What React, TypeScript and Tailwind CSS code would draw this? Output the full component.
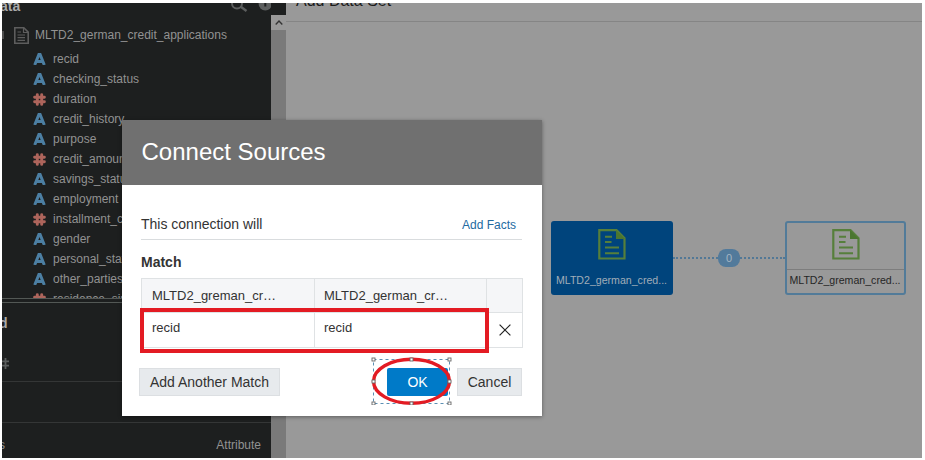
import React from "react";

type Kind = "text" | "number";

const columns: { name: string; kind: Kind }[] = [
  { name: "recid", kind: "text" },
  { name: "checking_status", kind: "text" },
  { name: "duration", kind: "number" },
  { name: "credit_history", kind: "text" },
  { name: "purpose", kind: "text" },
  { name: "credit_amount", kind: "number" },
  { name: "savings_status", kind: "text" },
  { name: "employment", kind: "text" },
  { name: "installment_commitment", kind: "number" },
  { name: "gender", kind: "text" },
  { name: "personal_status", kind: "text" },
  { name: "other_parties", kind: "text" },
  { name: "residence_since", kind: "number" },
];

function KindIcon({ kind }: { kind: Kind }) {
  return kind === "text" ? (
    <svg className="h-3 w-[13px] shrink-0" viewBox="0 0 13 12" fill="none" stroke="#4c7fa3" strokeWidth="3">
      <path d="M1.7 12 5.9 1.5h1.2L11.3 12M3.4 8.6h6.2" />
    </svg>
  ) : (
    <HashIcon color="#ae655c" />
  );
}

function HashIcon({ color }: { color: string }) {
  return (
    <svg className="h-[13px] w-[13px] shrink-0" viewBox="0 0 13 13" fill="none" stroke={color} strokeWidth="2.9" strokeLinecap="round">
      <path d="M4.3 1.6v9.8M8.7 1.6v9.8M1.6 4.3h9.8M1.6 8.7h9.8" />
    </svg>
  );
}

function SheetIcon() {
  return (
    <svg className="h-[31px] w-7" viewBox="0 0 28 31" fill="none">
      <path d="M1.3 1.2h17.2l8 8v20.3H1.3z" stroke="#567f3b" strokeWidth="2.2" />
      <path d="M18 1v9h9z" fill="#4b7630" />
      <path d="M7 7.7h7M7 13h6.5M7 18.5h14M7 24.2h14" stroke="#567f3b" strokeWidth="2" />
    </svg>
  );
}

function Sidebar() {
  return (
    <aside className="flex w-[269px] shrink-0 flex-col overflow-hidden bg-[#1d1f1f] text-xs text-[#929292]">
      <div className="flex h-3 shrink-0 items-end justify-between overflow-hidden">
        <span className="-ml-0.5 mb-px text-sm leading-4 font-bold text-[#aaaaaa]">ata</span>
        <svg className="h-4 w-10 shrink-0" viewBox="0 0 40 16" fill="none">
          <circle cx="6" cy="4.5" r="5" stroke="#5c5e5e" strokeWidth="2" />
          <path d="m9.5 7.5 6 4.5" stroke="#5c5e5e" strokeWidth="2.4" />
          <circle cx="34.3" cy="4.7" r="6.7" fill="#5c5e5e" />
          <path d="M34.3 2v5.5" stroke="#1d1f1f" strokeWidth="2" />
        </svg>
      </div>
      <div className="flex h-[283px] shrink-0 flex-col overflow-hidden pt-[10px]">
        <div className="flex h-5 shrink-0 items-center">
          <span className="h-2 w-[2px] bg-[#4d4d4d]" />
          <svg className="ml-[10px] h-[17px] w-[15px]" viewBox="0 0 15 17" fill="none" stroke="#5d5d5d">
            <path d="M.8.8h9l4.4 4.4v11H.8z" strokeWidth="1.6" />
            <path d="M9.5 1v4.5H14M3.5 5h3.5M3.5 8h7.5M3.5 10.7h7.5M3.5 13.3h7.5" strokeWidth="1.2" />
          </svg>
          <span className="ml-[6px] leading-5">MLTD2_german_credit_applications</span>
        </div>
        <div className="mt-1 flex flex-col">
          {columns.map((c) => (
            <div key={c.name} className="flex h-5 shrink-0 items-center gap-[7px] pl-[31px] whitespace-nowrap">
              <KindIcon kind={c.kind} />
              <span className="leading-5">{c.name}</span>
            </div>
          ))}
        </div>
      </div>
      <div className="h-[5px] shrink-0 border-y border-[#535855]" />
      <div className="flex h-[79px] shrink-0 flex-col border-b border-[#343636]">
        <span className="mt-[10px] -ml-[3px] text-sm leading-5 font-bold text-[#aaaaaa]">d</span>
        <svg className="mt-[24px] h-[13px] w-2" viewBox="0 0 8 13" fill="none" stroke="#5b5e5e" strokeWidth="1.8">
          <path d="M3.5 1v11M0 4.3h7M0 8.7h7" />
        </svg>
      </div>
      <div className="h-[41px] shrink-0 border-b border-[#343636]" />
      <div className="flex flex-1 items-center justify-between pt-[9px] pr-[10px]">
        <span className="-ml-[3px]">s</span>
        <span>Attribute</span>
      </div>
    </aside>
  );
}

function Scrollbar() {
  return (
    <div className="flex w-[15px] shrink-0 flex-col bg-[#7a7a7a]">
      <div className="h-3 bg-[#1d1f1f]" />
      <div className="flex h-[15px] items-center justify-center bg-[#999]">
        <svg className="h-[5px] w-2" viewBox="0 0 8 5" fill="none" stroke="#343434" strokeWidth="1.4">
          <path d="m.7 4.4 3.3-3.4 3.3 3.4" />
        </svg>
      </div>
    </div>
  );
}

function Canvas() {
  return (
    <main className="relative min-w-0 flex-1 overflow-hidden bg-[#999]">
      <div className="flex h-[19px] items-start border-b border-[#858585] pl-[10px]">
        <h2 className="-mt-3 text-base leading-5 text-[#1c1c1c]">Add Data Set</h2>
      </div>
      <div className="absolute top-[254px] left-[387px] w-[112px] border-t-2 border-dotted border-[#527896]" />
      <div className="absolute top-[246px] left-[432px] flex h-[18px] w-[22px] items-center justify-center rounded-[8px] bg-[#527a9b] text-[11px] text-[#a4b5c2]">
        0
      </div>
      <div className="absolute top-[218px] left-[265px] flex h-[74px] w-[122px] flex-col items-center rounded-[3px] bg-[#00447c] pt-[8px]">
        <SheetIcon />
        <span className="mt-[12px] -ml-px text-[10.6px] leading-4 text-[#a0adb8]">MLTD2_german_cred...</span>
      </div>
      <div className="absolute top-[218px] left-[499px] flex h-[74px] w-[121px] flex-col items-center rounded-[3px] border-2 border-[#527b99] pt-[6px]">
        <SheetIcon />
        <span className="mt-[9px] w-full border-t border-[#7d7d7d] pt-[2px] pr-px text-center text-[10.6px] leading-4 text-[#262626]">
          MLTD2_greman_cred...
        </span>
      </div>
    </main>
  );
}

function Annotations() {
  const handles = [
    [2, 2], [40, 2], [78, 2], [2, 24], [78, 24], [2, 46], [40, 46], [78, 46],
  ];
  return (
    <>
      <div className="absolute top-[188px] left-[18px] h-[45px] w-[349px] border-4 border-[#e31b23]" />
      <svg className="absolute top-[237px] left-[249px] h-12 w-[82px]" viewBox="0 0 82 48" fill="none">
        <rect x="2.5" y="2.5" width="76" height="44" stroke="#5b8fb3" strokeDasharray="3 3" />
        <ellipse cx="40.5" cy="24.3" rx="38" ry="22" stroke="#e31b23" strokeWidth="3.4" />
        {handles.map(([x, y]) => (
          <rect key={`${x}-${y}`} x={x - 1} y={y - 1} width="3" height="3" fill="#fff" stroke="#666" strokeWidth=".9" />
        ))}
      </svg>
    </>
  );
}

function ConnectDialog() {
  return (
    <section className="absolute top-[117px] left-[120px] flex h-[296px] w-[420px] flex-col bg-white text-[#333] shadow-[0_1px_4px_rgba(0,0,0,0.4)]">
      <header className="flex h-[65px] shrink-0 items-center bg-[#707070] pb-px pl-[19.5px] text-2xl text-white">Connect Sources</header>
      <div className="flex flex-1 flex-col">
        <div className="mr-5 ml-[19px] flex h-[55px] items-end justify-between border-b border-[#d9dcde] pr-[6px] pb-[5px]">
          <span className="text-sm leading-5">This connection will</span>
          <span className="text-xs leading-[18px] text-[#236a9f]">Add Facts</span>
        </div>
        <h3 className="mt-[12px] ml-[19px] text-sm leading-5 font-bold">Match</h3>
        <div className="mt-[6px] ml-[19px] grid h-[70px] w-[382px] grid-cols-[173px_172px_35px] grid-rows-[34px_34px] border border-[#dfe2e4] text-[13px]">
          <div className="border-r border-b border-[#dfe2e4] bg-[#f5f6f8] pt-[7px] pl-[10px] leading-5">MLTD2_greman_cr…</div>
          <div className="border-r border-b border-[#dfe2e4] bg-[#f5f6f8] pt-[7px] pl-[9px] leading-5">MLTD2_german_cr…</div>
          <div className="border-b border-[#dfe2e4] bg-[#f5f6f8]" />
          <div className="border-r border-[#dfe2e4] pt-[5px] pl-[10px] leading-5">recid</div>
          <div className="border-r border-[#dfe2e4] pt-[5px] pl-[9px] leading-5">recid</div>
          <div className="flex items-center justify-center">
            <svg className="h-3 w-3" viewBox="0 0 12 12" stroke="#222" strokeWidth="1.2">
              <path d="m.6.6 10.8 10.8M11.4.6.6 11.4" />
            </svg>
          </div>
        </div>
        <div className="mt-5 flex h-7 items-stretch pr-5 pl-[17px] text-sm">
          <button className="w-[141px] border border-[#dcdfe2] bg-[#e7eaed] pb-px">Add Another Match</button>
          <button className="ml-auto w-[61px] rounded-[2px] bg-[#007ac8] pb-px text-white">OK</button>
          <button className="ml-[9px] w-[65px] border border-[#dcdfe2] bg-[#e7eaed] pb-px">Cancel</button>
        </div>
      </div>
      <Annotations />
    </section>
  );
}

export default function App() {
  return (
    <div className="h-[460px] w-[925px] overflow-hidden bg-white pt-[3px] pl-[2px] font-['Liberation_Sans',Arial,sans-serif]">
      <div className="relative flex h-[455px] w-[920px] overflow-hidden">
        <Sidebar />
        <Scrollbar />
        <Canvas />
        <ConnectDialog />
      </div>
    </div>
  );
}
